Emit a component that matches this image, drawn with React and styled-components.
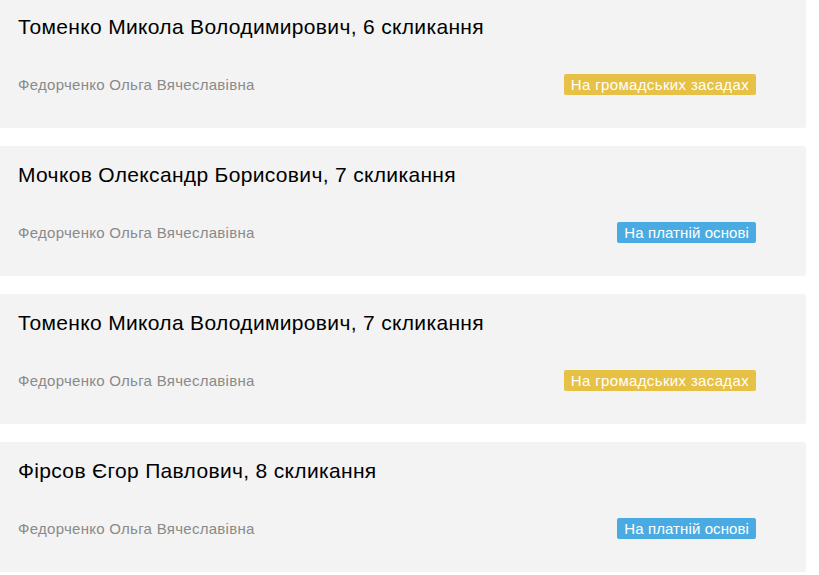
import React from "react";
import styled, { createGlobalStyle } from "styled-components";

const GlobalStyle = createGlobalStyle`
  body {
    margin: 0;
    background: #fff;
    font-family: "Liberation Sans", Arial, sans-serif;
  }
`;

const items = [
  { name: "Томенко Микола Володимирович", term: 6, type: "public" },
  { name: "Мочков Олександр Борисович", term: 7, type: "paid" },
  { name: "Томенко Микола Володимирович", term: 7, type: "public" },
  { name: "Фірсов Єгор Павлович", term: 8, type: "paid" },
];

const labels = {
  public: "На громадських засадах",
  paid: "На платній основі",
};

const List = () => (
  <StyledList>
    {items.map((item, i) => (
      <Card key={i}>
        <Title>
          {item.name}, {item.term} скликання
        </Title>
        <Footer>
          <Author>Федорченко Ольга Вячеславівна</Author>
          <Badge $type={item.type}>{labels[item.type]}</Badge>
        </Footer>
      </Card>
    ))}
  </StyledList>
);

const App = () => (
  <>
    <GlobalStyle />
    <List />
  </>
);

export default App;

const StyledList = styled.ul`
  list-style: none;
  margin: -2px 0 0;
  padding: 0;
  width: 806px;
  display: flex;
  flex-direction: column;
  gap: 18px;
`;

const Card = styled.li`
  background: #f3f3f3;
  border-radius: 0 3px 3px 0;
  height: 130px;
  box-sizing: border-box;
  padding: 17px 50px 0 18px;
`;

const Title = styled.h3`
  margin: 0;
  font-size: 21px;
  letter-spacing: 0.33px;
  font-weight: normal;
  line-height: 24px;
  color: #000;
`;

const Footer = styled.div`
  display: flex;
  align-items: center;
  justify-content: space-between;
  margin-top: 34px;
  height: 22px;
`;

const Author = styled.span`
  font-size: 15px;
  letter-spacing: 0.28px;
  color: #8a8a8a;
`;

const Badge = styled.span`
  background: ${p => (p.$type === "paid" ? "#4aabe2" : "#e6c146")};
  color: #fff;
  font-size: 15px;
  letter-spacing: ${p => (p.$type === "paid" ? "0.1px" : "0.35px")};
  line-height: 21px;
  padding: 0 7px;
  border-radius: 2px;
`;
